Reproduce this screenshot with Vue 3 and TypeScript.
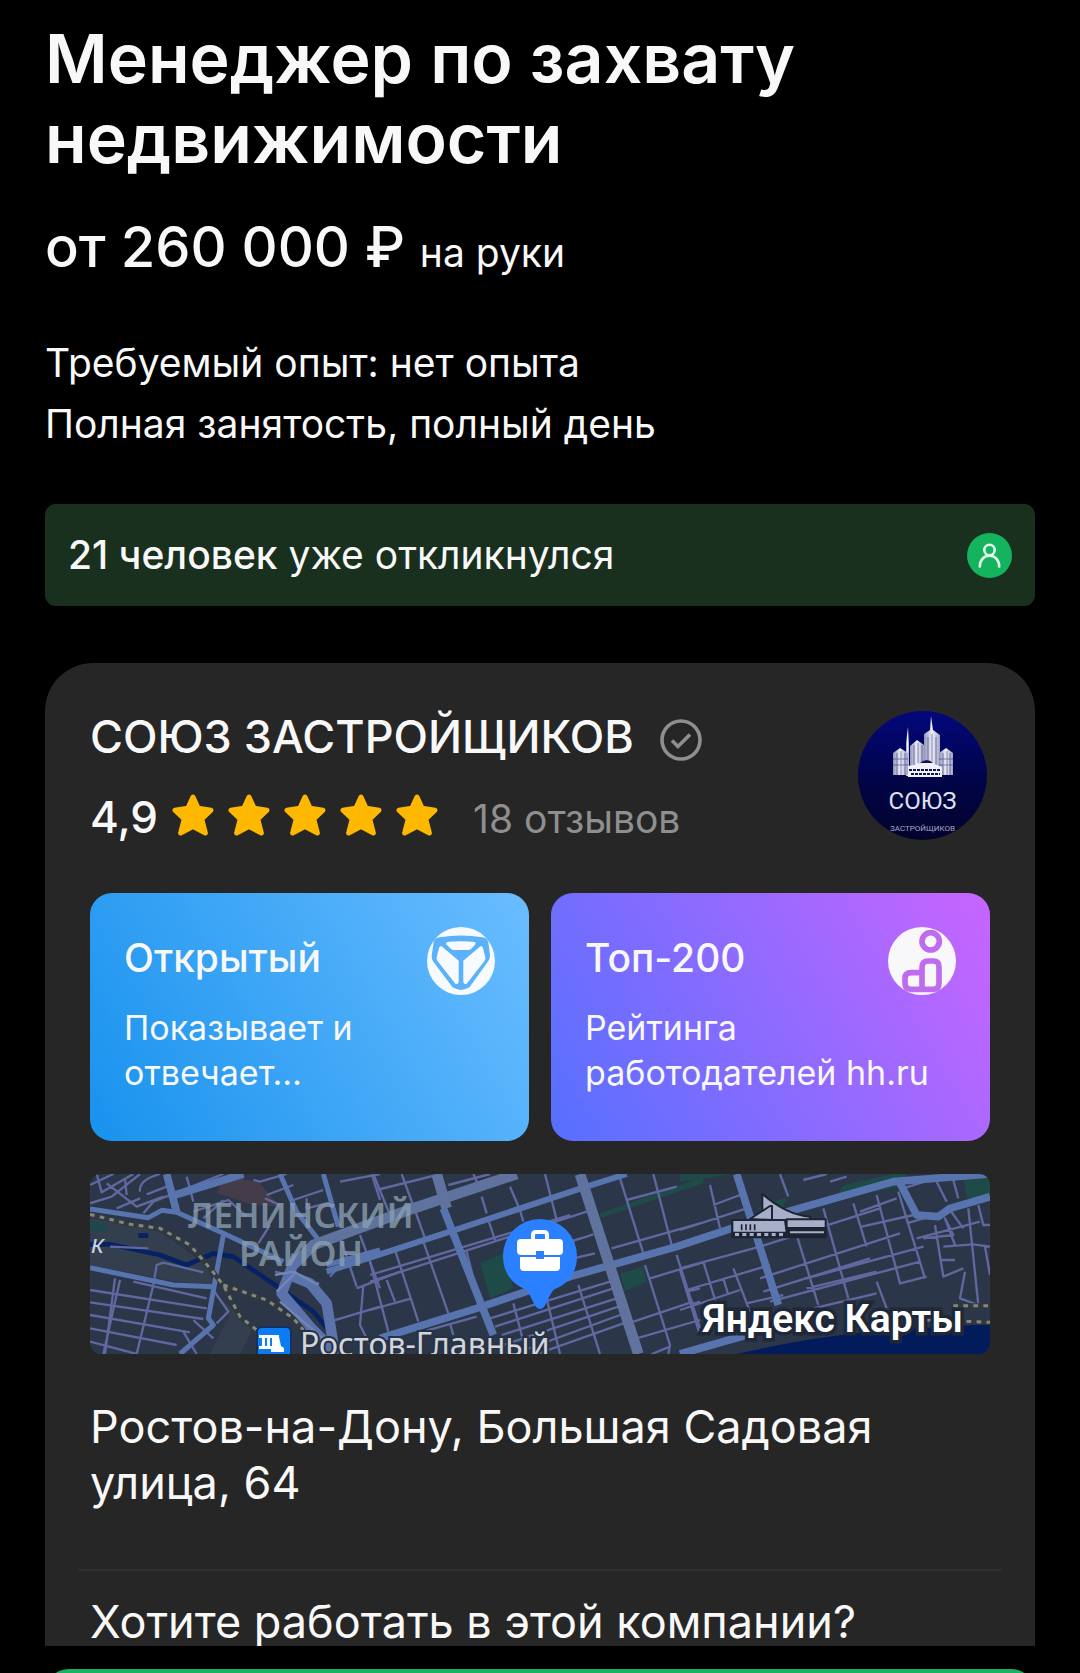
<script setup lang="ts">
interface Badge {
  id: 'open' | 'top'
  title: string
  text: string
}

const stars: number[] = [1, 2, 3, 4, 5]

const badges: Badge[] = [
  { id: 'open', title: 'Открытый', text: 'Показывает и отвечает…' },
  { id: 'top', title: 'Топ-200', text: 'Рейтинга работодателей hh.ru' },
]
</script>

<template>
  <div class="screen">
    <main class="content">
      <h1 class="title">Менеджер по захвату недвижимости</h1>
      <p class="salary">от 260 000 ₽ <span class="salary-note">на руки</span></p>

      <div class="conditions">
        <p>Требуемый опыт: нет опыта</p>
        <p>Полная занятость, полный день</p>
      </div>

      <div class="responses">
        <p><b>21 человек</b> уже откликнулся</p>
        <svg class="person" viewBox="0 0 45 45" aria-hidden="true">
          <circle cx="22.500" cy="22.500" r="22.500" fill="#14b45f" />
          <g fill="none" stroke="#e4fbee" stroke-width="2.600" stroke-linecap="round">
            <circle cx="22.500" cy="17" r="5.200" />
            <path d="M12.800 33.500C13 27 17 22.800 22.500 22.800S32 27 32.200 33.500" />
          </g>
        </svg>
      </div>

      <section class="card">
        <header class="company">
          <div class="company-info">
            <h2 class="company-name">
              СОЮЗ ЗАСТРОЙЩИКОВ
              <svg class="verified" viewBox="0 0 42 42" fill="none" stroke="#8f8f8f" aria-hidden="true">
                <circle cx="21" cy="21" r="19" stroke-width="3.600" />
                <path d="M12 21.500l6 6 12-12" stroke-width="3.600" />
              </svg>
            </h2>
            <div class="rating">
              <span class="score">4,9</span>
              <span class="stars">
                <svg v-for="s in stars" :key="s" viewBox="0 0 42 42" aria-hidden="true">
                  <path
                    d="M21 3L26.200 14.200L39 16.200L29.800 25L33.400 39L21 32.500L8.600 39L12.200 25L3 16.200L15.800 14.200Z"
                    fill="#ffb800" stroke="#ffb800" stroke-width="5" stroke-linejoin="round"
                  />
                </svg>
              </span>
              <a class="reviews" href="#reviews">18 отзывов</a>
            </div>
          </div>

          <svg class="logo" viewBox="0 0 129 129" role="img" aria-label="Союз застройщиков">
            <defs>
              <linearGradient id="logo-bg" x1="0" y1="0" x2="0" y2="1">
                <stop offset="0" stop-color="#03077c" />
                <stop offset=".55" stop-color="#010446" />
                <stop offset="1" stop-color="#02032c" />
              </linearGradient>
              <linearGradient id="tower" x1="0" x2="1">
                <stop offset="0" stop-color="#8f93b8" />
                <stop offset=".5" stop-color="#f2f2fa" />
                <stop offset="1" stop-color="#a0a3c6" />
              </linearGradient>
              <clipPath id="logo-clip"><circle cx="64.500" cy="64.500" r="64.500" /></clipPath>
            </defs>
            <g clip-path="url(#logo-clip)">
              <rect width="129" height="129" fill="url(#logo-bg)" />
              <g fill="url(#tower)">
                <path d="M50 16l1 16v33h-3V32z" />
                <path d="M35 64V42l7-5 8 5v22z" />
                <path d="M52 62V35l7-6 7 5v28z" />
                <path d="M66 62V23l6-4 1-14 2 14 7 5v38z" />
                <path d="M81 64V42l7-5 7 5v22z" />
              </g>
              <g stroke="#15195c" stroke-width="1" opacity=".5">
                <path d="M39 42v22M43 40v24M47 42v22M56 34v20M60 32v20M64 34v20M70 26v28M74 23v28M78 26v28M85 42v22M89 40v24M92 42v22" />
                <path d="M35 48h15M35 54h15M81 48h14M81 54h14" />
              </g>
              <path d="M50 66v-11l12-2q7-8 14 0l8 3v10z" fill="#f1f1fa" />
              <path d="M62 52q7-6 13 0z" fill="#10144f" />
              <path d="M51 59h32M53 63h29" stroke="#10144f" stroke-width="2" stroke-dasharray="3 1" />
              <text x="64.500" y="98" text-anchor="middle" class="logo-name">СОЮЗ</text>
              <text x="64.500" y="120" text-anchor="middle" class="logo-sub">ЗАСТРОЙЩИКОВ</text>
            </g>
          </svg>
        </header>

        <div class="badges">
          <article v-for="badge in badges" :key="badge.id" class="badge" :class="badge.id">
            <div class="badge-head">
              <h3>{{ badge.title }}</h3>
              <svg v-if="badge.id === 'open'" viewBox="0 0 204 204" aria-hidden="true">
                <circle cx="102" cy="102" r="102" fill="#f7fbff" />
                <path
                  d="M38 31Q102 20 166 31Q180 32 184 46L189 84Q190 94 184 102L128 180Q102 198 76 180L19 104Q13 96 14 86L20 45Q23 33 38 31Z"
                  fill="#5bb2fa"
                />
                <path d="M60 45Q102 41 144 45Q148 48 144 53L133 65Q129 69 122 69H82Q75 69 71 65L58 52Q56 48 60 45Z" fill="#f7fbff" />
                <path d="M44 58L95 101V165Q93 173 85 170L31 101Q28 97 29 91L36 63Q38 56 44 58Z" fill="#f7fbff" />
                <path d="M160 58L109 101V165Q111 173 119 170L173 101Q176 97 175 91L168 63Q166 56 160 58Z" fill="#f7fbff" />
              </svg>
              <svg v-else viewBox="0 0 204 204" aria-hidden="true">
                <circle cx="102" cy="102" r="102" fill="#f8f8fa" />
                <g fill="none" stroke="#bf6bf0" stroke-width="17">
                  <circle cx="128" cy="43" r="26" />
                  <path d="M102 187V123Q102 102 120 102H136Q153 102 153 120V168Q153 187 136 187H70Q51 187 51 169V154Q51 137 70 137H102" />
                </g>
              </svg>
            </div>
            <p>{{ badge.text }}</p>
          </article>
        </div>

        <svg class="map" viewBox="0 0 900 180" preserveAspectRatio="xMidYMid slice" role="img" aria-label="Яндекс Карты">
          <rect width="900" height="180" fill="#2b3648" />
          <g transform="scale(.33333) translate(-30 -27)" fill="none" stroke-linejoin="round">
            <!-- blocks, parks and water -->
            <g stroke="none">
              <path d="M30 160L240 200L380 300L400 360L290 350L30 300ZM400 380L520 490L480 567H390L450 450Z" fill="#333e4f" />
              <path d="M440 27L540 55L600 125L520 120L410 85Z" fill="#443b4b" />
              <path d="M30 170L80 175L75 200L30 198Z" fill="#1e484d" />
              <path d="M1200 295L1270 265L1300 370L1230 400ZM1620 325L1690 305L1700 350L1635 378ZM1560 160L1870 55V35L1560 145ZM970 130L1060 90L1070 110Z" fill="#1e4a48" />
              <path d="M1800 50L1960 27H1800ZM2290 60L2440 27H2480V60L2260 105ZM2650 40L2730 27V110L2660 95ZM2030 130L2120 95L2100 160Z" fill="#1e4a48" />
              <path d="M1970 567Q2180 520 2330 505T2730 478V567Z" fill="#011b5b" />
            </g>
            <!-- river -->
            <path d="M30 238L90 238L240 270L320 300L400 265L460 275L600 370L700 440L750 500M175 212H205" stroke="#062263" stroke-width="14" />

            <!-- local streets -->
            <g stroke="#60689f" stroke-width="7">
              <path d="M30 60L100 27M50 27L65 82L160 27M30 115L95 95L180 27M80 55L170 125L250 95M135 40L140 90M110 130L180 100M180 80Q175 45 240 27M200 88L260 65M190 145L220 110L430 27M320 35L340 110M520 45L540 50L620 27M340 140L445 105L500 155M370 160L430 105M560 90L640 60M640 105L730 75M680 100V130L760 110M780 50L900 27M535 235L570 180M555 100L600 120" />
              <path d="M90 245L205 250M220 360L230 300L250 293L370 322M120 345L70 567M220 360L170 567M30 375L380 430M30 412L370 462M30 450L330 502M30 490L290 540M30 530L170 567M105 340L75 567M160 350L380 400M340 465L400 520M310 500L350 567M400 375L445 440L410 475" />
              <path d="M750 335L790 290L900 255M750 470L900 425M840 210L900 370M830 370L960 320M850 360L840 480L870 540M780 215L830 365M880 27L930 150M585 320L715 355L700 370" />
            </g>
            <g transform="translate(870 0)" stroke="#60689f" stroke-width="7">
              <path d="M5 27L30 105M95 27L140 150M20 75L200 30M310 27L325 60M235 60L360 27M420 65L450 135M525 27L560 165M335 95L350 145M450 135L460 170M0 350L650 140M0 330L600 150M75 255L145 470M160 230L235 445M50 345L75 410M0 290L55 500M0 435L125 400M140 150L165 220M355 165L375 225M290 260L325 400M240 475L250 510M170 497L320 455M360 460L720 350M375 485L730 370M395 510L740 400M400 540L745 425M430 567L750 450M500 567L760 475M430 415L470 567M530 400L570 567M625 360L690 567M600 230L650 215L670 208M610 280L675 265" />
              <path d="M750 40L820 265M850 27L905 240M770 105L920 65M725 250L990 175M825 300L900 540L895 567M920 270L990 490M840 340L990 295M790 470L970 410M800 520L990 465M845 567L900 545M950 380L990 370M960 420L990 410" />
            </g>
            <g transform="translate(1800 0)" stroke="#60689f" stroke-width="7">
              <path d="M90 60L120 190M100 120L180 90M0 195L200 130M300 27L325 95M370 45L440 27M450 50L500 35M0 310L240 245L600 130M70 290L110 420M0 315L60 510M20 375L270 300M0 435L180 375M130 340L145 390M160 310L210 440M350 210L415 420M430 130L505 400M520 115L560 245M590 90L660 355L740 335M655 80L735 340M240 340L660 205M250 380L570 280M270 410L720 290M380 340L730 245M380 370L590 320M400 430L590 385M540 140L650 100M545 185L700 150M590 350L620 430M670 70L750 45M680 175L800 140M710 220L900 170M765 180L790 335L850 310M770 50L800 110M815 27L835 100M810 135L850 190M865 130L895 420L840 400L855 320M895 120L910 180L930 180M780 285H825M790 245L880 238L930 245M915 245L930 330M730 220L820 210L795 160L825 240M200 415L310 390" />
            </g>

            <!-- avenues -->
            <g stroke="#5874ae" stroke-width="15">
              <path d="M30 132L205 158L245 136L290 142L430 205L610 290M30 308L280 360L400 365M430 210L385 460L400 480L300 567M600 27L650 140L720 230M730 27L775 185M740 300L900 255" />
              <path d="M740 320L1110 200L1510 68L1640 27" stroke-width="18" />
              <path d="M260 27L290 142M285 90L490 27M900 520L1190 430L1470 335L1790 245L2000 175L2440 50L2730 27M1090 130L1240 510" stroke-width="23" />
              <path d="M1970 27L2095 420M1800 567L2000 510M2455 45L2510 150L2575 155L2610 130L2730 95" stroke-width="23" />
            </g>
            <g stroke="#60739f" stroke-width="32">
              <path d="M640 300L700 240L1000 130L1310 27M1070 27L1100 130M1500 27L1675 567" />
              <path d="M650 270L605 385L690 485L770 567M640 335L690 355L740 415L765 567" stroke="#5b72aa" />
              <path d="M585 330L640 320L715 360M600 410L740 530M650 320L590 380" stroke="#7085b8" stroke-width="7" />
            </g>

            <!-- railways -->
            <g stroke="#33383a" stroke-width="15">
              <path d="M30 148L150 178L240 190L330 240L390 310L430 360L480 455L530 495M430 360L560 405L640 460L670 495M2620 422H2730M2420 460L2730 472" />
              <path d="M30 148L150 178L240 190L330 240L390 310L430 360L480 455L530 495M430 360L560 405L640 460L670 495M2620 422H2730M2420 460L2730 472" stroke="#7f8882" stroke-width="9" stroke-dasharray="14 16" />
            </g>

            <!-- landmark -->
            <g transform="translate(1800 0)" stroke="#1d2433" stroke-width="6" fill="#a8afc9">
              <path d="M247 87Q320 150 390 155V165H247Z" />
              <path d="M210 162L270 123H276V165Z" />
              <path d="M157 165H315V190H437V215H157Z" fill="#1d2433" />
              <path d="M157 165H315L320 203H157ZM320 163H437V189H320Z" />
              <path d="M185 178v18M198 178v18M211 178v18M224 178v18" stroke-width="5" />
              <path d="M165 209h150" stroke-dasharray="12 10" stroke-width="10" stroke="#a8afc9" />
              <path d="M157 217H437" />
              <path d="M330 202H432" stroke="#a8afc9" />
            </g>
          </g>

          <g class="district">
            <text x="211" y="54" text-anchor="middle">ЛЕНИНСКИЙ</text>
            <text x="211" y="92" text-anchor="middle">РАЙОН</text>
          </g>
          <text x="1" y="79" class="edge-label">к</text>

          <rect x="167" y="153" width="34" height="36" rx="5" fill="#0b7cf2" stroke="#14305e" stroke-width="2" />
          <path d="M169 161h20v3h-3v8h3v3h-20v-3h3v-8h-3z" fill="#fff" />
          <path d="M175 164h2v8h-2zM180 164h2v8h-2z" fill="#0b7cf2" />
          <path d="M182 163h7l2 9 3 2v4h-13v-4l2-2z" fill="#fff" />
          <text x="210" y="182" class="station">Ростов-Главный</text>
          <text x="873" y="158" text-anchor="end" class="brand">Яндекс Карты</text>

          <!-- pin with a briefcase -->
          <g transform="translate(410 45)">
            <path d="M40 0A37 37 0 0 0 3 37C3 55 13 65 25 70C29 72 31 80 36 88Q40 92 44 88C49 80 51 72 55 70C67 65 77 55 77 37A37 37 0 0 0 40 0Z" fill="#2b80ff" />
            <path d="M33 21v-5q0-3 3-3h8q3 0 3 3v5" fill="none" stroke="#fff" stroke-width="4" />
            <rect x="17" y="20" width="46" height="16" rx="4" fill="#fff" />
            <path d="M20 38H60V48Q60 52 56 52H24Q20 52 20 48Z" fill="#fff" />
            <rect x="36" y="32" width="8" height="8" fill="#2b80ff" />
          </g>
        </svg>

        <p class="address">Ростов-на-Дону, Большая Садовая улица, 64</p>
        <hr class="divider" />
        <p class="question">Хотите работать в этой компании?</p>
      </section>
    </main>

    <footer class="actions">
      <button type="button" class="apply" aria-label="Откликнуться"></button>
    </footer>
  </div>
</template>

<style>
body {
  margin: 0;
  background: #000;
}
</style>

<style scoped>
.screen {
  display: flex;
  flex-direction: column;
  height: 100vh;
  overflow: hidden;
  background: #000;
  color: #f8f8f8;
  font-family: Inter, "Liberation Sans", sans-serif;
}

h1,
h2,
h3,
p {
  margin: 0;
  font-weight: 400;
}

.content {
  flex: 1;
  min-height: 0;
  overflow: hidden;
  padding: 18px 45px 0;
}

.title {
  font-size: 68px;
  line-height: 80px;
  font-weight: 600;
}

.salary {
  margin-top: 32px;
  font-size: 56px;
  line-height: 74px;
  font-weight: 500;
}

.salary-note {
  font-size: 39px;
  font-weight: 400;
}

.conditions {
  margin-top: 42px;
  font-size: 39px;
  line-height: 61px;
}

.responses {
  display: flex;
  align-items: center;
  justify-content: space-between;
  margin-top: 50px;
  padding: 0 23px;
  border-radius: 11px;
  background: #19301f;
  font-size: 39px;
  line-height: 102px;
}

.responses b {
  font-weight: 500;
}

.person {
  width: 45px;
  height: 45px;
}

.card {
  margin-top: 57px;
  padding: 48px 45px;
  border-radius: 48px;
  background: #262626;
}

.company {
  display: flex;
  justify-content: space-between;
}

.company-name {
  display: flex;
  align-items: center;
  gap: 26px;
  font-size: 45px;
  line-height: 52px;
  font-weight: 500;
}

.verified {
  width: 42px;
  height: 42px;
  margin-top: 6px;
}

.rating {
  display: flex;
  align-items: baseline;
  margin-top: 26px;
  line-height: 56px;
}

.score {
  font-size: 44px;
  font-weight: 500;
}

.stars {
  display: flex;
  align-self: flex-start;
  gap: 14px;
  margin: 5px 35px 0 14px;
}

.stars svg {
  width: 42px;
  height: 42px;
}

.reviews {
  color: #8f8f8f;
  font-size: 39px;
  text-decoration: none;
}

.logo {
  width: 129px;
  height: 129px;
  margin-right: 3px;
}

.logo-name {
  fill: #dfe0ef;
  font: 400 24px Roboto, sans-serif;
}

.logo-sub {
  fill: #a5a7c8;
  font: 400 8px Roboto, sans-serif;
}

.badges {
  display: grid;
  grid-template-columns: 1fr 1fr;
  gap: 22px;
  margin-top: 46px;
}

.badge {
  box-sizing: border-box;
  min-height: 248px;
  padding: 34px;
  border-radius: 22px;
}

.badge.open {
  background: linear-gradient(60deg, #1892ee, #6abdff);
}

.badge.top {
  background: linear-gradient(60deg, #5570ff, #c865ff);
}

.badge-head {
  display: flex;
  justify-content: space-between;
  height: 68px;
}

.badge-head h3 {
  font-size: 39px;
  line-height: 62px;
  font-weight: 500;
}

.badge-head svg {
  width: 68px;
  height: 68px;
}

.badge p {
  margin-top: 10px;
  font-size: 34px;
  line-height: 45px;
}

.open p {
  max-width: 280px;
}

.map {
  display: block;
  width: 100%;
  height: 180px;
  margin-top: 33px;
  border-radius: 11px;
}

.district {
  fill: #8ba0ae;
  fill-opacity: 0.8;
  font: 600 35px "Noto Sans", sans-serif;
}

.edge-label {
  fill: #ccd0d8;
  font: italic 400 26px "Noto Sans", sans-serif;
}

.station {
  fill: #d3d5d9;
  stroke: #263246;
  stroke-width: 4px;
  paint-order: stroke;
  font: 400 32px "Noto Sans", sans-serif;
}

.brand {
  fill: #fff;
  stroke: #1f2839;
  stroke-width: 7px;
  paint-order: stroke;
  font: 600 39px Roboto, sans-serif;
}

.address {
  margin-top: 45px;
  font-size: 45px;
  line-height: 56px;
}

.divider {
  height: 2px;
  margin: 58px -12px 0;
  border: 0;
  background: #2f2f2f;
}

.question {
  margin-top: 23px;
  font-size: 45px;
  line-height: 56px;
}

.actions {
  flex: 0 0 4px;
  padding: 23px 45px 0;
  overflow: hidden;
}

.apply {
  display: block;
  width: 100%;
  height: 112px;
  border: 0;
  border-radius: 24px;
  background: #1bb160;
}
</style>
